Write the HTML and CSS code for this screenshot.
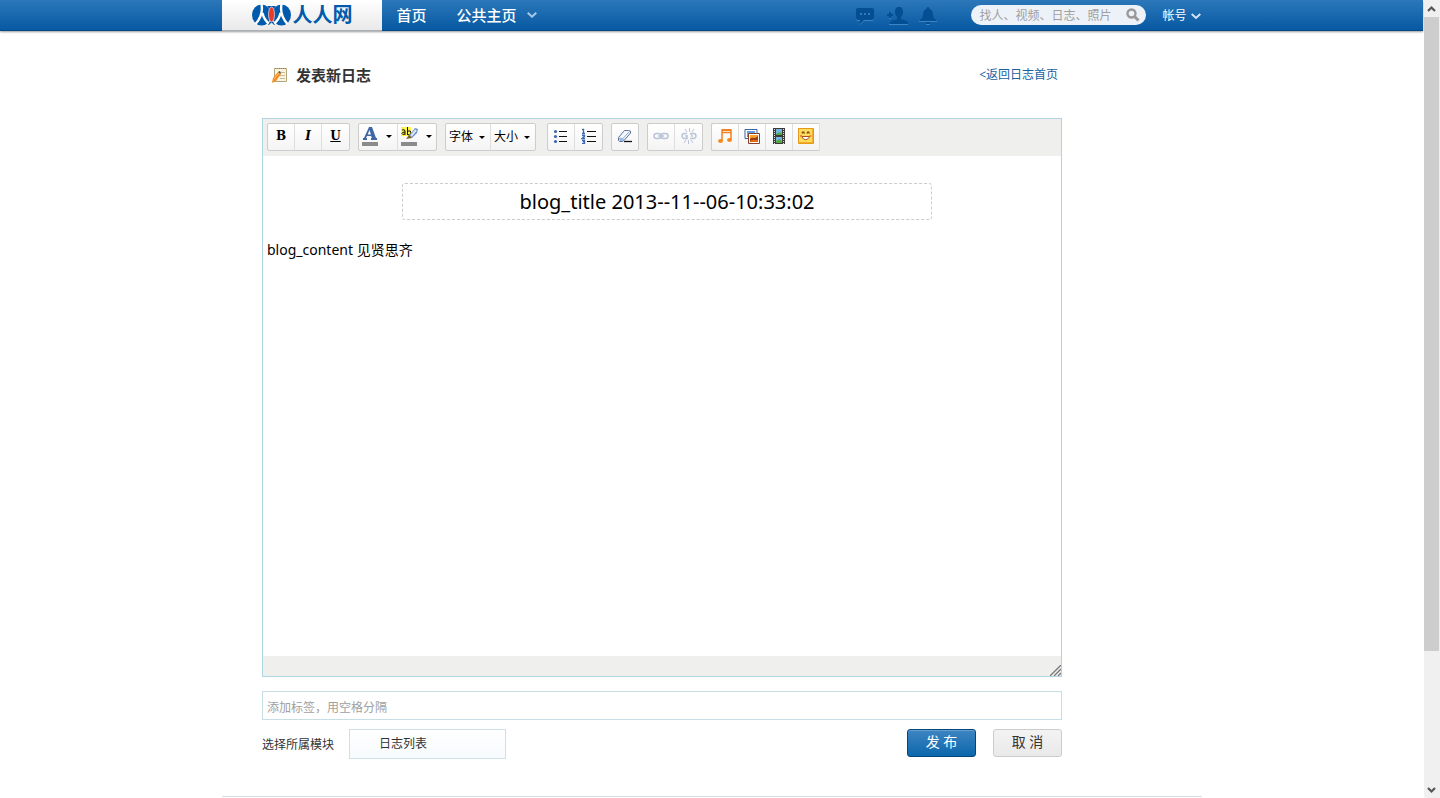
FILE: index.html
```html
<!DOCTYPE html>
<html lang="zh-CN">
<head>
<meta charset="utf-8">
<title>发表新日志</title>
<link rel="stylesheet" href="styles.css">
</head>
<body>
<div class="page">
  <header class="topbar">
    <div class="topbar-inner">
      <a class="logo" href="#">
        <svg width="39" height="22" viewBox="0 0 39 22" aria-hidden="true">
          <ellipse cx="9.500" cy="11" rx="9.500" ry="10.500" fill="#005bac"/>
          <ellipse cx="29.500" cy="11" rx="9.500" ry="10.500" fill="#005bac"/>
          <path d="M9.500 0C11 8 9 14 3.500 20M10.500 9c1 5 3 8 7 11M29.500 0C28 8 30 14 35.500 20M28.500 9c-1 5-3 8-7 11" fill="none" stroke="#fff" stroke-width="2.400"/>
          <path d="M15 2c5 5 5 13 1 19h7c-4-6-4-14 1-19z" fill="#005bac"/>
          <path d="M17 21q2.500-4 5 0v1h-5z" fill="#f2f2f2"/>
          <ellipse cx="19.500" cy="10.500" rx="3" ry="7.500" fill="#e8392b" stroke="#fff" stroke-width=".6"/>
        </svg>
        <span class="logo-text">人人网</span>
      </a>
      <nav class="nav">
        <a href="#">首页</a>
        <a href="#">公共主页
          <svg width="10" height="6" viewBox="0 0 10 6" aria-hidden="true"><path d="M.7.7 5 4.700 9.300.7" fill="none" stroke="#a9c8e8" stroke-width="2"/></svg>
        </a>
      </nav>
      <div class="tools">
        <a href="#" aria-label="消息"><svg width="20" height="20" viewBox="0 0 20 20"><path d="M3 3h14q2 0 2 2v8q0 2-2 2H9l-4 4v-4H3q-2 0-2-2V5q0-2 2-2z" fill="#3d84c3"/><path d="M3 2h14q2 0 2 2v8q0 2-2 2H9l-4 4v-4H3q-2 0-2-2V4q0-2 2-2z" fill="#044e94"/><path d="M5 7h2v2H5zM9 7h2v2H9zM13 7h2v2h-2z" fill="#3279b9"/></svg></a>
        <a href="#" aria-label="好友请求"><svg width="22" height="20" viewBox="0 0 22 20"><path d="M13 1c3 0 4 2 4 5q0 3-2 5v2l6 2q1 1 1 3H4q0-2 1-3l6-2v-2q-2-2-2-5c0-3 1-5 4-5z" fill="#044e94"/><path d="M3 18.500h19M3 12.500h2" stroke="#3d84c3"/><path d="M4 6v6M1 9h6" stroke="#044e94" stroke-width="2"/></svg></a>
        <a href="#" aria-label="提醒"><svg width="18" height="20" viewBox="0 0 18 20"><path d="M9 1q1.500 0 1.500 2Q14 4 14 9q0 3 3 5v1H1v-1q3-2 3-5 0-5 3.500-6Q7.500 1 9 1zM6 16h6q-1 2-3 2t-3-2z" fill="#044e94"/><path d="M0 15.500h18M7 18.500h4" stroke="#3d84c3"/></svg></a>
      </div>
      <form class="search">
        <input type="text" placeholder="找人、视频、日志、照片" aria-label="搜索">
        <button type="button" aria-label="搜索"><svg width="14" height="14" viewBox="0 0 14 14"><circle cx="5.500" cy="5.500" r="4" fill="none" stroke="#999" stroke-width="2.400"/><path d="m8.500 8.500 4 4" stroke="#999" stroke-width="3"/></svg></button>
      </form>
      <a class="account" href="#">帐号
        <svg width="10" height="7" viewBox="0 0 10 7" aria-hidden="true"><path d="m.7 1 4.300 4L9.300 1" fill="none" stroke="#d3e3f3" stroke-width="2"/></svg>
      </a>
    </div>
  </header>

  <main class="content">
    <div class="heading">
      <svg width="16" height="16" viewBox="0 0 16 16" aria-hidden="true">
        <path d="M2.500 1.500h12v13h-12z" fill="#fbf5df" stroke="#b5a57d"/>
        <path d="M3 1.500h11" stroke="#8d8260" stroke-dasharray="1 1"/>
        <path d="M8 5.500h5M8 8.500h5M8 11.500h5" stroke="#c9bd98"/>
        <path d="m0 16 1-5 5-6 3 2-5 7z" fill="#f28d1e"/><path d="m2 12 5-6" stroke="#ffc477"/><path d="m6 5 2-1 1 3z" fill="#444"/>
      </svg>
      <h1>发表新日志</h1>
      <a class="back" href="#">&lt;返回日志首页</a>
    </div>

    <section class="editor">
      <div class="toolbar">
        <div class="group">
          <button type="button" class="tb letter">B</button>
          <button type="button" class="tb letter italic">I</button>
          <button type="button" class="tb letter underline">U</button>
        </div>
        <div class="group">
          <button type="button" class="tb color" aria-label="文字颜色">
            <svg width="16" height="20" viewBox="0 0 16 20"><path d="M7 1h3l4 11h1v2H9v-2h1l-1-2H5l-1 2h1v2H1v-2h1zM7.500 4 5.700 8.500h3.200z" fill="#3f65a5"/><path d="M0 16h16v4H0z" fill="#8b8b8b"/></svg>
            <i class="caret"></i>
          </button>
          <button type="button" class="tb color" aria-label="背景颜色">
            <svg width="17" height="20" viewBox="0 0 17 20"><path d="M0 1h10v9H0z" fill="#fff34d"/><path d="M1 4q3-1 3 1v4M4 6Q1 6 1 7.500T4 8M6.500 1v8M7 5q3-1 3 2t-3 1.500" fill="none" stroke="#111"/><path d="m8 10 6-8 3 1-1 4-5 5z" fill="#6b8fc4"/><path d="m10 10 5-6" stroke="#dbe8fa" stroke-width="2"/><path d="m5 13 3-4 3 3z" fill="#806017"/><path d="M0 16h16v4H0z" fill="#8b8b8b"/></svg>
            <i class="caret"></i>
          </button>
        </div>
        <div class="group">
          <button type="button" class="tb drop">字体<i class="caret"></i></button>
          <button type="button" class="tb drop">大小<i class="caret"></i></button>
        </div>
        <div class="group spaced">
          <button type="button" class="tb" aria-label="项目列表"><svg width="16" height="16" viewBox="0 0 16 16"><path d="M6 3.500h8M6 8.500h8M6 13.500h8" stroke="#111"/><g fill="#4067b2"><circle cx="2.500" cy="3.500" r="1.600"/><circle cx="2.500" cy="8.500" r="1.600"/><circle cx="2.500" cy="13.500" r="1.600"/></g></svg></button>
          <button type="button" class="tb" aria-label="编号列表"><svg width="16" height="16" viewBox="0 0 16 16"><path d="M6 3.500h9M6 8.500h9M6 13.500h9" stroke="#111"/><path d="M1 1.500h1.500V5M1 5.500h3M1 7.500h2.500v1L1 10.500h3M1 12.500h2.500V15.500H1M2 13.700h2" fill="none" stroke="#4067b2" stroke-width="1.300"/></svg></button>
        </div>
        <div class="group">
          <button type="button" class="tb single" aria-label="清除格式"><svg width="16" height="16" viewBox="0 0 16 16"><path d="M7 13.500h8" stroke="#111" stroke-width="1.300"/><path d="m1.500 9.500 6-7h4q3 0 2 2.500l-6 7-2 1.500h-3l-1-1z" fill="#f5f9ff" stroke="#5a7396"/><path d="m2 9.500 4 .5 1.500 2-2 1h-3z" fill="#9cbbe3"/><path d="m6.500 10 6-6.500" stroke="#8aa5c8"/></svg></button>
        </div>
        <div class="group">
          <button type="button" class="tb" aria-label="链接" disabled><svg width="16" height="16" viewBox="0 0 16 16"><g fill="none" stroke="#b9c4d6" stroke-width="1.500"><rect x="1" y="5.500" width="7" height="5" rx="2.500"/><rect x="8" y="5.500" width="7" height="5" rx="2.500"/><path d="M5 8h6"/></g></svg></button>
          <button type="button" class="tb" aria-label="取消链接" disabled><svg width="16" height="16" viewBox="0 0 16 16"><g fill="none" stroke="#b9c4d6" stroke-width="1.500"><path d="M6 5.500H3.500a2.500 2.500 0 0 0 0 5H6V9M9 10.500h3.500a2.500 2.500 0 0 0 0-5H10V7M4 8h3M10 8h2"/><path stroke-width="1" d="M8.500 0v4M4 1l2 3M13 1l-2 3M7.500 12v4M3 15l2-3M12 15l-2-3"/></g></svg></button>
        </div>
        <div class="group open">
          <button type="button" class="tb" aria-label="音乐"><svg width="16" height="16" viewBox="0 0 16 16"><path d="M5 13V2h9v10M5 4.500h9" fill="none" stroke="#f08221" stroke-width="1.500"/><path d="M5 2h9" stroke="#f08221" stroke-width="2"/><ellipse cx="3.500" cy="13" rx="2.500" ry="2" fill="#f58a1f"/><ellipse cx="12.500" cy="12" rx="2.500" ry="2" fill="#f58a1f"/></svg></button>
          <button type="button" class="tb" aria-label="图片"><svg width="17" height="17" viewBox="0 0 17 17"><path d="M1 1.500h12v9H1z" fill="#fff" stroke="#3b62ac"/><path d="M3 3h8v6H3z" fill="#5ca2df"/><path d="m3 9 3-4 3 4z" fill="#4aa04a"/><path d="M4.500 5.500h11v10h-11z" fill="#fff" stroke="#8b4129"/><path d="M6 7h8v7H6z" fill="#f9a32b"/><path d="M6 11c3-3 4 1 8-3v6H6z" fill="#9b3c12"/><path d="M7 12h7v2H6z" fill="#e56a10"/></svg></button>
          <button type="button" class="tb" aria-label="视频"><svg width="14" height="16" viewBox="0 0 14 16"><path d="M1 0h12v16H1z" fill="#3b3b3b"/><path d="M4 1h6v6H4zM4 9h6v6H4z" fill="#75b6df"/><path d="m4 6 4-2 2 2v1H4zM4 13l4-2 2 3v1H4z" fill="#58a544"/><path d="M2.500 1v15M11.500 1v15" stroke="#ddd" stroke-dasharray="1 1"/></svg></button>
          <button type="button" class="tb" aria-label="表情"><svg width="16" height="16" viewBox="0 0 16 16"><path d="M.5.500h15v15H.5z" fill="#f3ae2c" stroke="#e49b1c"/><path d="M1 1h13v13H1z" fill="#ffdc5c"/><path d="M4 5.500q1-3 2.500 0M9 5.500q1-3 2.500 0" fill="none" stroke="#7b4510" stroke-width="1.300"/><path d="M3.500 8.500q4 6.500 8.500 0z" fill="#fff" stroke="#a6501c"/><path d="M2 8h2M11.500 8h2" stroke="#f08c42" stroke-width="2"/></svg></button>
        </div>
      </div>
      <input class="title" type="text" value="blog_title 2013--11--06-10:33:02" aria-label="标题">
      <textarea class="body-text" aria-label="正文">blog_content 见贤思齐</textarea>
      <div class="status">
        <svg width="11" height="11" viewBox="0 0 11 11" aria-hidden="true"><path d="M0 11 11 0M4 11l7-7M8 11l3-3" stroke="#777" stroke-width="1.300"/></svg>
      </div>
    </section>

    <input class="tags" type="text" placeholder="添加标签，用空格分隔" aria-label="标签">

    <div class="actions">
      <label for="module">选择所属模块</label>
      <select id="module"><option>日志列表</option></select>
      <button type="button" class="btn primary">发 布</button>
      <button type="button" class="btn">取 消</button>
    </div>
  </main>
</div>
<div class="scroll" aria-hidden="true">
  <svg width="16" height="17" viewBox="0 0 16 17"><path d="m4 11 3.500-3.500L11 11" fill="none" stroke="#555" stroke-width="2.200"/></svg>
  <div class="track"><div class="thumb"></div></div>
  <svg width="16" height="17" viewBox="0 0 16 17"><path d="m4 7 3.500 3.500L11 7" fill="none" stroke="#555" stroke-width="2.200"/></svg>
</div>
</body>
</html>
```
FILE: styles.css
```css
* { box-sizing: border-box; }
body {
  margin: 0;
  display: flex;
  min-height: 100vh;
  background: #fff;
  color: #333;
  font: 12px/18px "Noto Sans", "Noto Sans CJK SC", sans-serif;
}
a { color: #1a5f9e; text-decoration: none; }
svg { display: block; flex: none; }
input, select, textarea, button { font: inherit; color: inherit; margin: 0; }
button { padding: 0; cursor: pointer; }

.page { flex: 1; min-width: 0; }
.topbar {
  margin-right: 1px;
  background: linear-gradient(#2b77b9, #0859a3);
  border-bottom: 1px solid #044783;
  box-shadow: 0 1px 2px rgba(0, 0, 0, .4);
}
.topbar-inner {
  display: flex;
  align-items: center;
  max-width: 980px;
  height: 30px;
  margin: 0 auto;
}
.logo {
  display: flex;
  align-items: center;
  gap: 2px;
  width: 160px;
  height: 31px;
  padding-left: 30px;
  align-self: flex-start;
  background: linear-gradient(#fff, #e9e9e9);
  border-bottom: 1px solid #aaafb5;
}
.logo-text { font-size: 20px; line-height: 28px; font-weight: 700; color: #005bac; }
.nav { display: flex; margin-left: 15px; gap: 30px; }
.nav a {
  display: flex;
  align-items: center;
  gap: 10px;
  color: #fff;
  font-size: 15px;
  font-weight: 500;
  line-height: 32px;
}
.tools { display: flex; gap: 11px; margin-left: auto; margin-right: 34px; padding-top: 2px; }
.search {
  display: flex;
  align-items: center;
  width: 175px;
  height: 20px;
  padding: 0 6px 0 8px;
  border-radius: 10px;
  background: #edf2f9;
}
.search input { flex: 1; min-width: 0; border: 0; padding: 2px 0 0; background: none; outline: 0; line-height: 18px; }
.search button { border: 0; background: none; }
::placeholder { color: #a0a0a0; opacity: 1; }
.account { display: flex; align-items: center; gap: 4px; margin: 0 1px 0 16px; padding-top: 2px; color: #fff; }

.content {
  max-width: 980px;
  margin: 0 auto;
  padding: 32px 140px 37px 40px;
  border-bottom: 1px solid #d0e0e6;
}
.heading { display: flex; align-items: center; gap: 8px; height: 24px; margin-bottom: 31px; padding: 0 4px 0 10px; }
.heading h1 { margin: 0; font-size: 15px; line-height: 24px; font-weight: 700; }
.back { margin-left: auto; line-height: 20px; }

.editor { display: flex; flex-direction: column; border: 1px solid #b0d5e0; }
.toolbar { display: flex; gap: 8px; padding: 4px 4px 5px; background: #efefee; }
.group {
  display: flex;
  height: 28px;
  border: 1px solid #cdcdcd;
  border-radius: 2px;
  background: linear-gradient(#fff, #f4f4f4);
}
.group.spaced { margin-left: 3px; }
.group.open { border-right: 0; }
.tb {
  display: flex;
  align-items: center;
  justify-content: center;
  width: 27px;
  padding: 0 0 2px;
  border: 0;
  border-right: 1px solid #dedede;
  background: none;
  color: #000;
}
.group:not(.open) .tb:last-child { border-right: 0; }
.single { width: 26px; }
.letter { font: 700 12px/16px "DejaVu Serif", serif; }
.italic { font-style: italic; }
.underline { text-decoration: underline; }
.color { width: 39px; gap: 8px; padding-right: 2px; }
.color:last-child { width: 38px; }
.drop { width: 45px; gap: 6px; padding: 0 2px 0 0; }
.drop:last-child { width: 44px; }
.caret { border: 3px solid transparent; border-top-color: #000; border-bottom: 0; }

.title {
  margin: 27px 129px 0 139px;
  height: 37px;
  padding: 0 4px;
  border: 1px dashed #ccc;
  border-radius: 3px;
  outline: 0;
  text-align: center;
  color: #000;
  font-size: 20px;
  line-height: 28px;
}
.body-text {
  height: 422px;
  margin-top: 14px;
  padding: 4px;
  border: 0;
  outline: 0;
  resize: none;
  color: #000;
  font-size: 14px;
  line-height: 24px;
}
.status { display: flex; justify-content: flex-end; align-items: flex-end; height: 20px; background: #efefee; }

.tags {
  display: block;
  width: 100%;
  height: 29px;
  margin-top: 14px;
  padding: 4px 4px 0;
  border: 1px solid #c8dee6;
  outline: 0;
}
.actions { display: flex; align-items: flex-start; margin-top: 9px; }
.actions label { line-height: 32px; height: 30px; margin-right: 15px; }
.actions select {
  appearance: none;
  width: 157px;
  height: 30px;
  margin-right: auto;
  padding: 0 29px;
  border: 1px solid #cddfe7;
  background: linear-gradient(#fff, #f7fbfd);
}
.btn {
  width: 69px;
  height: 28px;
  margin-left: 17px;
  padding-bottom: 2px;
  border: 1px solid #ccc;
  border-radius: 3px;
  background: linear-gradient(#f3f3f3, #e9e9e9);
  font-size: 14px;
  line-height: 24px;
}
.btn.primary {
  border-color: #064579;
  background: linear-gradient(#3f85c2, #0b67ac);
  box-shadow: inset 0 1px #639fd2;
  color: #fff;
}

.scroll { display: flex; flex-direction: column; width: 16px; background: #f0f0f0; }
.track { flex: 1; padding-right: 1px; }
.thumb { height: 83%; background: #cdcdcd; }
```
